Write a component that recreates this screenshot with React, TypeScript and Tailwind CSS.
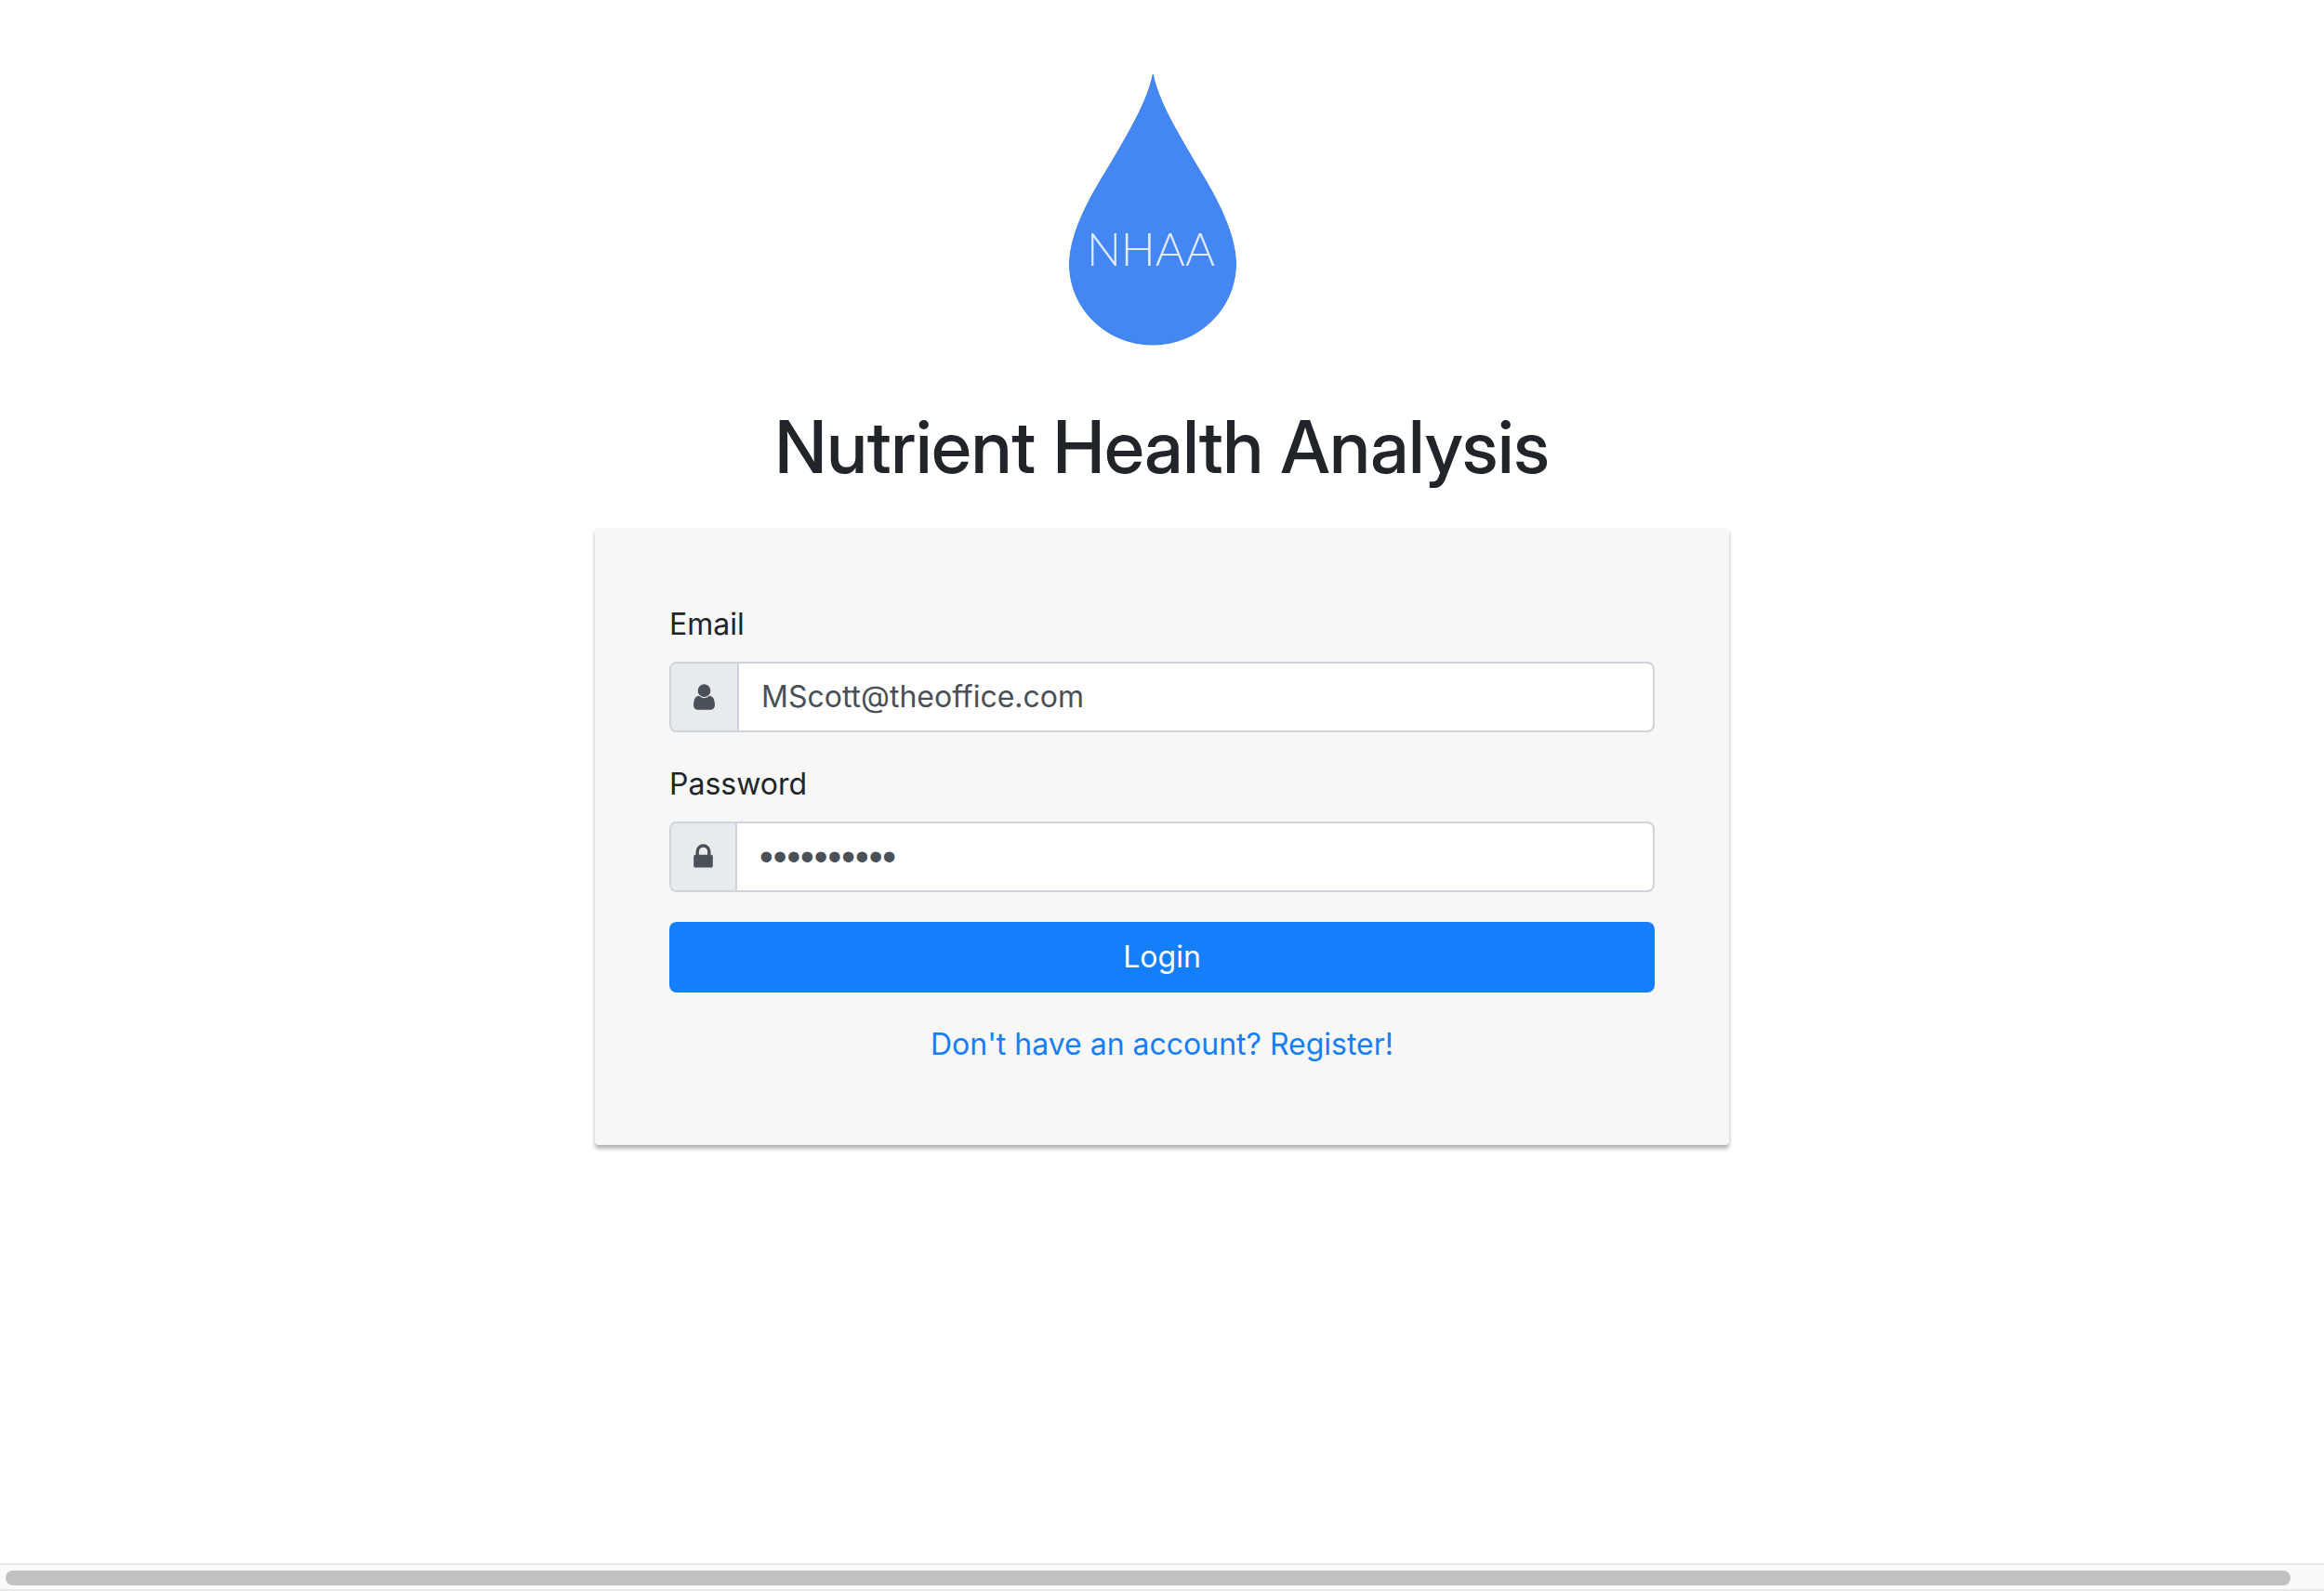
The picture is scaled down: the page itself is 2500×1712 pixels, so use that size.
import type { InputHTMLAttributes, ReactNode } from "react";

function DropLogo() {
  return (
    <svg viewBox="0 0 200 300" className="mr-5 h-[300px] w-[200px]" role="img" aria-label="NHAA">
      <path
        d="M100.300 3C106 32 127 66 145 97C160 122 189.500 168 189.500 208C188.500 256 149 294 100 294C51 294 11 256 10.500 208C10.500 168 41 122 56 97C74 66 94.500 32 100.300 3Z"
        fill="#4487f2"
        stroke="#3f83f1"
        strokeWidth="1"
      />
      <text
        x="98"
        y="209"
        textAnchor="middle"
        fill="#e0ebfe"
        className="font-['Lato',sans-serif] text-[49px] font-light"
      >
        NHAA
      </text>
    </svg>
  );
}

function UserIcon() {
  return (
    <svg viewBox="256 0 1280 1792" className="h-8 w-[23px]" fill="currentColor" aria-hidden="true">
      <path d="M1536 1399q0 109-62.5 187t-150.5 78h-854q-88 0-150.5-78t-62.5-187q0-85 8.5-160.5t31.5-152 58.5-131 94-89 134.5-34.5q131 128 313 128t313-128q76 0 134.5 34.5t94 89 58.5 131 31.5 152 8.5 160.5zm-256-887q0 159-112.5 271.5t-271.5 112.5-271.5-112.5-112.5-271.5 112.5-271.5 271.5-112.5 271.5 112.5 112.5 271.5z" />
    </svg>
  );
}

function LockIcon() {
  return (
    <svg viewBox="320 0 1152 1792" className="h-8 w-[21px]" fill="currentColor" aria-hidden="true">
      <path d="M640 768h512v-192q0-106-75-181t-181-75-181 75-75 181v192zm832 96v576q0 40-28 68t-68 28h-960q-40 0-68-28t-28-68v-576q0-40 28-68t68-28h32v-192q0-184 132-316t316-132 316 132 132 316v192h32q40 0 68 28t28 68z" />
    </svg>
  );
}

type FieldProps = InputHTMLAttributes<HTMLInputElement> & {
  id: string;
  label: string;
  icon: ReactNode;
};

function Field({ id, label, icon, ...input }: FieldProps) {
  return (
    <div className="mb-8">
      <label htmlFor={id} className="mb-4 block">
        {label}
      </label>
      <div className="flex h-[76px] overflow-hidden rounded-lg border-2 border-[#ced4da] bg-white text-[#495057]">
        <span className="flex shrink-0 items-center border-r-2 border-[#ced4da] bg-[#e8ebee] px-6">
          {icon}
        </span>
        <input
          id={id}
          className="min-w-0 flex-1 bg-transparent px-6 outline-none [&[type=password]]:font-['Liberation_Sans',sans-serif] [&[type=password]]:text-[42px]"
          {...input}
        />
      </div>
    </div>
  );
}

export default function App() {
  return (
    <div className="flex min-h-screen flex-col bg-white font-['Inter',sans-serif] text-[32px] leading-[48px] text-[#212529]">
      <main className="flex flex-1 flex-col items-center pt-[77px]">
        <DropLogo />
        <h1 className="mt-14 mb-[39px] text-center font-['Inter_Display','Inter',sans-serif] text-[78px] leading-[96px] font-medium [font-variation-settings:'opsz'_32]">
          Nutrient Health Analysis
        </h1>
        <form
          className="w-full max-w-[1220px] rounded-[4px] bg-[#f7f7f7] px-20 pt-20 pb-[84px] shadow-[0_4px_4px_rgba(0,0,0,0.3)]"
          onSubmit={(e) => e.preventDefault()}
        >
          <Field
            id="email"
            label="Email"
            icon={<UserIcon />}
            type="email"
            defaultValue="MScott@theoffice.com"
          />
          <Field
            id="password"
            label="Password"
            icon={<LockIcon />}
            type="password"
            defaultValue="dundermiff"
          />
          <button type="submit" className="h-[76px] w-full rounded-lg bg-[#157efb] text-white">
            Login
          </button>
          <div className="mt-8 text-center">
            <a href="#register" className="text-[#157efb]">
              Don't have an account? Register!
            </a>
          </div>
        </form>
      </main>
      <div className="h-[30px] border-y-2 border-[#e8e8e8] bg-[#fafafa] pt-1.5 pr-9 pl-1.5" aria-hidden="true">
        <div className="h-4 rounded-full bg-[#c1c1c1]" />
      </div>
    </div>
  );
}
